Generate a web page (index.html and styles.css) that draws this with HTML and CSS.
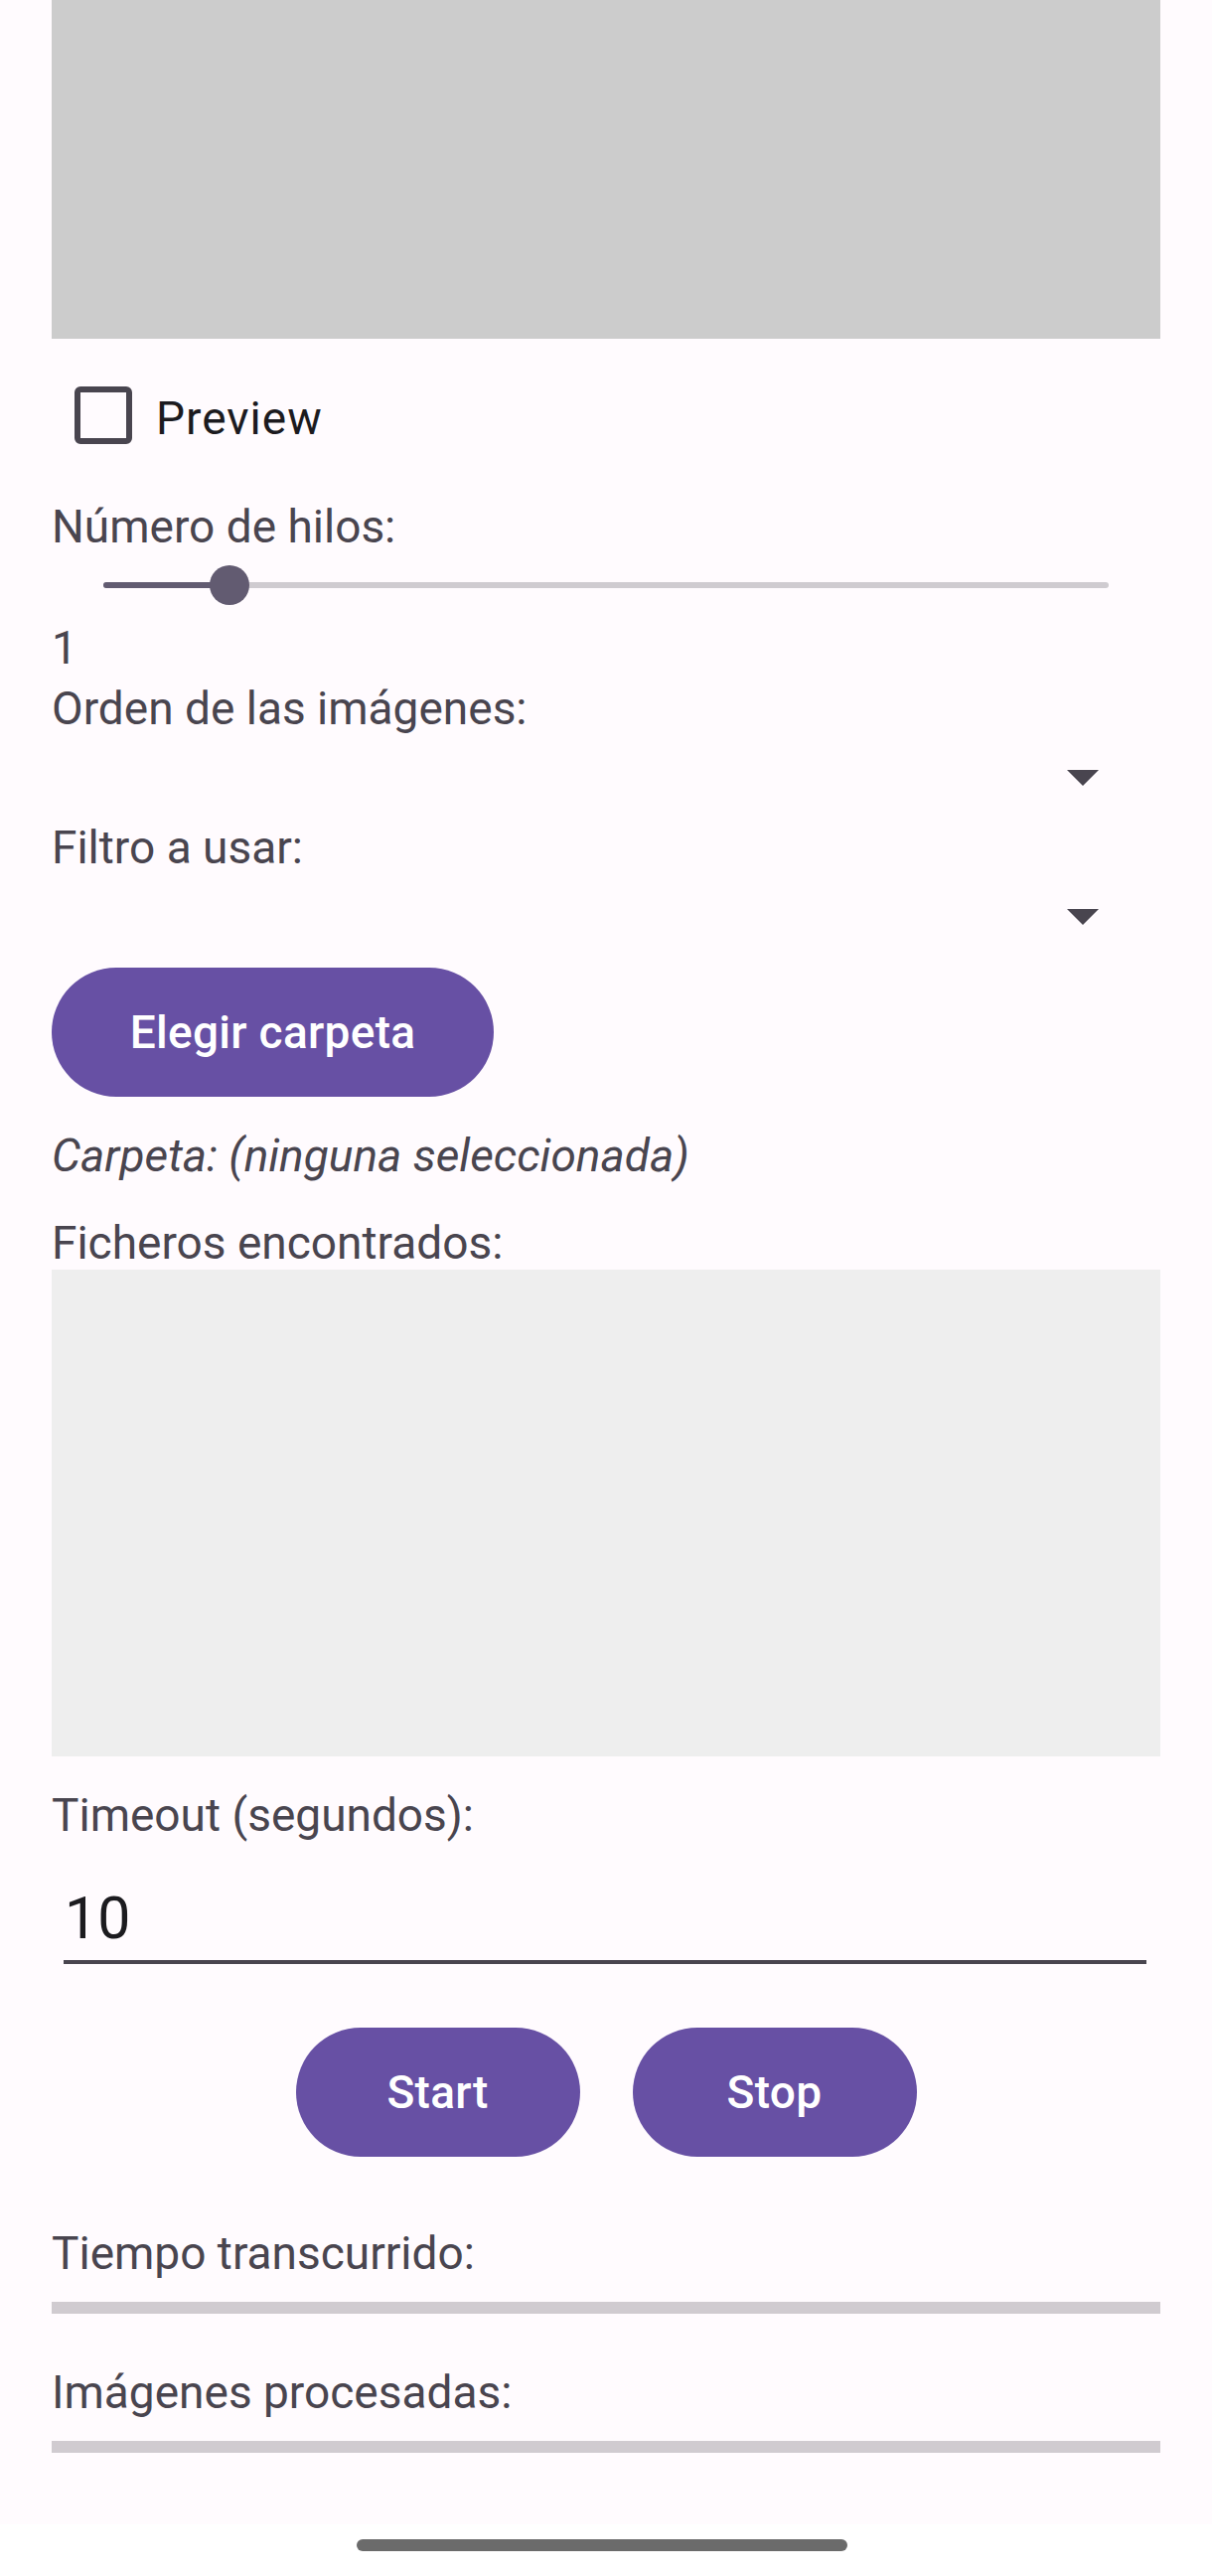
FILE: index.html
```html
<!DOCTYPE html>
<html lang="es">
<head>
<meta charset="utf-8">
<title>Procesado de imágenes</title>
<link rel="stylesheet" href="styles.css">
</head>
<body>
<div class="screen">
  <main class="content">
    <div class="preview-box"></div>

    <label class="check-row">
      <span class="checkbox"></span>
      <span class="check-label">Preview</span>
    </label>

    <div class="label label-hilos">Número de hilos:</div>
    <div class="slider">
      <div class="track">
        <div class="track-active" style="width: 12.5%"></div>
        <div class="thumb" style="left: 12.5%"></div>
      </div>
    </div>
    <div class="value">1</div>

    <div class="label label-orden">Orden de las imágenes:</div>
    <div class="dropdown"><span class="arrow"></span></div>

    <div class="label">Filtro a usar:</div>
    <div class="dropdown"><span class="arrow"></span></div>

    <div class="btn-row-left">
      <button class="btn btn-folder">Elegir carpeta</button>
    </div>

    <div class="label folder-text">Carpeta: (ninguna seleccionada)</div>

    <div class="label label-files">Ficheros encontrados:</div>
    <div class="files-box"></div>

    <div class="label label-timeout">Timeout (segundos):</div>
    <div class="input-wrap">
      <div class="input">10</div>
    </div>

    <div class="btn-row">
      <button class="btn btn-action">Start</button>
      <button class="btn btn-action">Stop</button>
    </div>

    <div class="label label-tiempo">Tiempo transcurrido:</div>
    <div class="progress"></div>

    <div class="label label-imagenes">Imágenes procesadas:</div>
    <div class="progress"></div>
  </main>

  <footer class="navbar">
    <div class="nav-pill"></div>
  </footer>
</div>
</body>
</html>
```

FILE: styles.css
```css
html, body {
  margin: 0;
  padding: 0;
}

body {
  background: #FFFBFE;
  font-family: Roboto, "Noto Sans", "Liberation Sans", sans-serif;
  color: #49454F;
}

.screen {
  height: 2593px;
  display: flex;
  flex-direction: column;
  overflow: hidden;
}

.content {
  flex: 1;
  padding: 0 52px;
  display: flex;
  flex-direction: column;
}

.preview-box {
  height: 341px;
  background: #CCCCCC;
}

.check-row {
  display: flex;
  align-items: flex-start;
  margin-top: 48px;
  padding-left: 23px;
  gap: 24px;
}

.checkbox {
  width: 58px;
  height: 58px;
  box-sizing: border-box;
  border: 6px solid #49454F;
  border-radius: 6px;
}

.check-label {
  font-size: 46px;
  line-height: 54px;
  margin-top: 5px;
  letter-spacing: 1px;
  color: #1C1B1F;
}

.label {
  font-size: 46px;
  line-height: 54px;
  color: #49454F;
  white-space: nowrap;
}

.label-hilos {
  margin-top: 55px;
}

.slider {
  margin-top: 12px;
  height: 40px;
  padding: 0 52px;
  display: flex;
  align-items: center;
}

.track {
  position: relative;
  flex: 1;
  height: 6px;
  background: #CFCBD0;
  border-radius: 3px;
}

.track-active {
  height: 100%;
  background: #625B71;
  border-radius: 3px;
}

.thumb {
  position: absolute;
  top: 50%;
  width: 40px;
  height: 40px;
  border-radius: 50%;
  background: #625B71;
  transform: translate(-50%, -50%);
}

.value {
  margin-top: 16px;
  font-size: 46px;
  line-height: 54px;
  color: #49454F;
}

.label-orden {
  margin-top: 7px;
}

.dropdown {
  height: 86px;
  display: flex;
  align-items: center;
  justify-content: flex-end;
  padding-right: 62px;
}

.arrow {
  width: 0;
  height: 0;
  border-left: 16px solid transparent;
  border-right: 16px solid transparent;
  border-top: 16px solid #49454F;
}

.btn-row-left {
  display: flex;
  margin-top: 8px;
}

.btn {
  height: 130px;
  border: none;
  border-radius: 65px;
  background: #6750A4;
  color: #FFFFFF;
  font-family: Roboto, "Noto Sans", "Liberation Sans", sans-serif;
  font-size: 46px;
  font-weight: 500;
  letter-spacing: 0.3px;
  padding: 0;
  display: flex;
  align-items: center;
  justify-content: center;
}

.btn-folder {
  width: 445px;
}

.folder-text {
  margin-top: 32px;
  font-style: italic;
}

.label-files {
  margin-top: 34px;
}

.files-box {
  height: 490px;
  background: #EEEEEE;
}

.label-timeout {
  margin-top: 32px;
}

.input-wrap {
  padding: 0 14px 0 12px;
}

.input {
  padding: 42px 0 8px 1px;
  font-size: 59px;
  line-height: 69px;
  color: #1C1B1F;
  border-bottom: 4px solid #49454F;
}

.btn-row {
  display: flex;
  justify-content: center;
  gap: 53px;
  margin-top: 64px;
}

.btn-action {
  width: 286px;
}

.label-tiempo {
  margin-top: 70px;
}

.progress {
  margin-top: 22px;
  height: 12px;
  background: #D0CBD0;
}

.label-imagenes {
  margin-top: 52px;
}

.navbar {
  height: 52px;
  background: #FFFFFF;
  display: flex;
  justify-content: center;
  padding-top: 15px;
  box-sizing: border-box;
}

.nav-pill {
  width: 494px;
  height: 12px;
  border-radius: 6px;
  background: #6B6B6B;
  margin-right: 8px;
}
```
